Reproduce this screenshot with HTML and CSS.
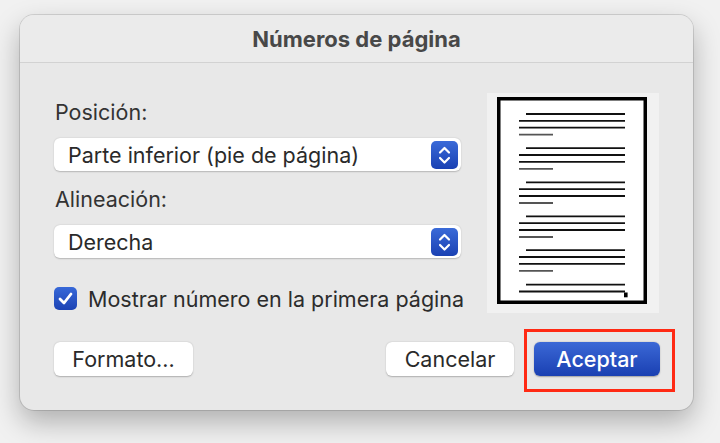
FILE: index.html
```html
<!DOCTYPE html>
<html lang="es">
<head>
<meta charset="utf-8">
<title>Números de página</title>
<link rel="stylesheet" href="styles.css">
</head>
<body>
<div class="stage">
  <div class="dialog">
    <div class="titlebar">Números de página</div>
    <div class="content">
      <div class="main-row">
        <div class="fields">
          <div class="label">Posición:</div>
          <div class="select">
            <span class="select-text">Parte inferior (pie de página)</span>
            <span class="stepper">
              <svg width="27" height="28" viewBox="0 0 27 28"><path d="M9 11.5 L13.5 7 L18 11.5 M9 17 L13.5 21.5 L18 17" fill="none" stroke="#fff" stroke-width="2.2" stroke-linecap="round" stroke-linejoin="round"/></svg>
            </span>
          </div>
          <div class="label label-2">Alineación:</div>
          <div class="select">
            <span class="select-text">Derecha</span>
            <span class="stepper">
              <svg width="27" height="28" viewBox="0 0 27 28"><path d="M9 11.5 L13.5 7 L18 11.5 M9 17 L13.5 21.5 L18 17" fill="none" stroke="#fff" stroke-width="2.2" stroke-linecap="round" stroke-linejoin="round"/></svg>
            </span>
          </div>
          <div class="check-row">
            <span class="checkbox">
              <svg width="23" height="23" viewBox="0 0 23 23"><path d="M6 12 L10 16 L17 7" fill="none" stroke="#fff" stroke-width="2.8" stroke-linecap="round" stroke-linejoin="round"/></svg>
            </span>
            <span class="check-label">Mostrar número en la primera página</span>
          </div>
        </div>
        <div class="preview">
          <svg width="172" height="220" viewBox="0 0 172 220">
            <rect x="11.75" y="5.75" width="146.5" height="203.5" fill="#fff" stroke="#000" stroke-width="3.5"/>
            <g stroke-width="1.8">
              <g transform="translate(0,21)">
                <line x1="39" y1="0" x2="138" y2="0" stroke="#111"/>
                <line x1="32" y1="6.8" x2="138" y2="6.8" stroke="#111"/>
                <line x1="32" y1="13.7" x2="138" y2="13.7" stroke="#111"/>
                <line x1="32" y1="20.7" x2="66" y2="20.7" stroke="#555"/>
              </g>
              <g transform="translate(0,55.2)">
                <line x1="39" y1="0" x2="138" y2="0" stroke="#111"/>
                <line x1="32" y1="6.8" x2="138" y2="6.8" stroke="#111"/>
                <line x1="32" y1="13.7" x2="138" y2="13.7" stroke="#111"/>
                <line x1="32" y1="20.7" x2="66" y2="20.7" stroke="#555"/>
              </g>
              <g transform="translate(0,89.3)">
                <line x1="39" y1="0" x2="138" y2="0" stroke="#111"/>
                <line x1="32" y1="6.8" x2="138" y2="6.8" stroke="#111"/>
                <line x1="32" y1="13.7" x2="138" y2="13.7" stroke="#111"/>
                <line x1="32" y1="20.7" x2="66" y2="20.7" stroke="#555"/>
              </g>
              <g transform="translate(0,123.3)">
                <line x1="39" y1="0" x2="138" y2="0" stroke="#111"/>
                <line x1="32" y1="6.8" x2="138" y2="6.8" stroke="#111"/>
                <line x1="32" y1="13.7" x2="138" y2="13.7" stroke="#111"/>
                <line x1="32" y1="20.7" x2="66" y2="20.7" stroke="#555"/>
              </g>
              <g transform="translate(0,157.2)">
                <line x1="39" y1="0" x2="138" y2="0" stroke="#111"/>
                <line x1="32" y1="6.8" x2="138" y2="6.8" stroke="#111"/>
                <line x1="32" y1="13.7" x2="138" y2="13.7" stroke="#111"/>
                <line x1="32" y1="20.7" x2="66" y2="20.7" stroke="#555"/>
              </g>
              <g transform="translate(0,191.6)">
                <line x1="39" y1="0" x2="138" y2="0" stroke="#111"/>
                <line x1="32" y1="6.9" x2="138" y2="6.9" stroke="#111"/>
              </g>
            </g>
            <rect x="137" y="199.5" width="3.6" height="4.8" fill="#000"/>
          </svg>
        </div>
      </div>
      <div class="button-row">
        <button class="btn btn-format">Formato...</button>
        <div class="spacer"></div>
        <button class="btn btn-cancel">Cancelar</button>
        <div class="highlight">
          <button class="btn btn-primary">Aceptar</button>
        </div>
      </div>
    </div>
  </div>
</div>
</body>
</html>
```

FILE: styles.css
```css
html, body {
  margin: 0;
  padding: 0;
}

body {
  width: 720px;
  height: 443px;
  overflow: hidden;
  background: #f1f1f1;
  font-family: Inter, "Liberation Sans", Arial, sans-serif;
  color: #2c2c2c;
}

.stage {
  padding: 15px 27px 0 20px;
}

.dialog {
  width: 673px;
  height: 395px;
  box-sizing: border-box;
  border-radius: 14px;
  background: #e8e8e8;
  box-shadow: 0 0 0 1px rgba(0, 0, 0, 0.12), 0 12px 28px rgba(0, 0, 0, 0.28);
  overflow: hidden;
  display: flex;
  flex-direction: column;
}

.titlebar {
  height: 48px;
  flex: none;
  background: #ebebeb;
  border-bottom: 1px solid #d2d2d2;
  display: flex;
  align-items: center;
  justify-content: center;
  font-size: 22px;
  font-weight: 700;
  color: #484848;
  padding-top: 1px;
  box-sizing: border-box;
}

.content {
  padding: 30px 34px 0 34px;
}

.main-row {
  display: flex;
  justify-content: space-between;
}

.fields {
  width: 407px;
  display: flex;
  flex-direction: column;
}

.label {
  font-size: 21.5px;
  line-height: 26px;
  height: 26px;
  margin-top: 6px;
  padding-left: 1px;
  color: #333;
}

.label-2 {
  margin-top: 15px;
}

.select {
  margin-top: 13px;
  height: 33px;
  box-sizing: border-box;
  background: #fff;
  border-radius: 6px;
  box-shadow: 0 0.5px 1.5px rgba(0, 0, 0, 0.22);
  display: flex;
  align-items: center;
  justify-content: space-between;
  padding: 0 3px 0 14px;
}

.select-text {
  font-size: 21.5px;
  color: #2a2a2a;
}

.stepper {
  width: 27px;
  height: 28px;
  border-radius: 5px;
  background: linear-gradient(#3a6ad8, #1a41b3);
  display: flex;
}

.check-row {
  margin-top: 29px;
  height: 23px;
  display: flex;
  align-items: center;
  gap: 11px;
}

.checkbox {
  flex: none;
  width: 23px;
  height: 23px;
  border-radius: 5px;
  background: linear-gradient(#3768d8, #1c43b4);
  display: flex;
}

.check-label {
  font-size: 21.5px;
  color: #2c2c2c;
  white-space: nowrap;
}

.preview {
  width: 172px;
  height: 220px;
  background: #f1f1f1;
  display: flex;
}

.button-row {
  margin-top: 29px;
  display: flex;
  align-items: center;
}

.spacer {
  flex: 1;
}

.btn {
  height: 34px;
  border: none;
  border-radius: 6px;
  background: #fff;
  box-shadow: 0 0.5px 1.5px rgba(0, 0, 0, 0.25);
  font-family: Inter, "Liberation Sans", Arial, sans-serif;
  font-size: 21.5px;
  color: #2a2a2a;
  padding: 0 17px;
  margin: 0;
}

.btn-format {
  width: 139px;
  padding: 0;
}

.btn-cancel {
  width: 128px;
  padding: 0;
}

.highlight {
  position: relative;
  margin-left: 20px;
  margin-right: -1px;
}

.highlight::after {
  content: "";
  position: absolute;
  left: -10px;
  top: -13px;
  right: -15px;
  bottom: -16px;
  border: 3px solid #ff2a14;
  pointer-events: none;
}

.btn-primary {
  width: 126px;
  padding: 0;
  display: block;
  background: linear-gradient(#3b68d6, #1a40b2);
  color: #fff;
  font-weight: 500;
  box-shadow: 0 0.5px 1.5px rgba(0, 0, 0, 0.3);
}
```
